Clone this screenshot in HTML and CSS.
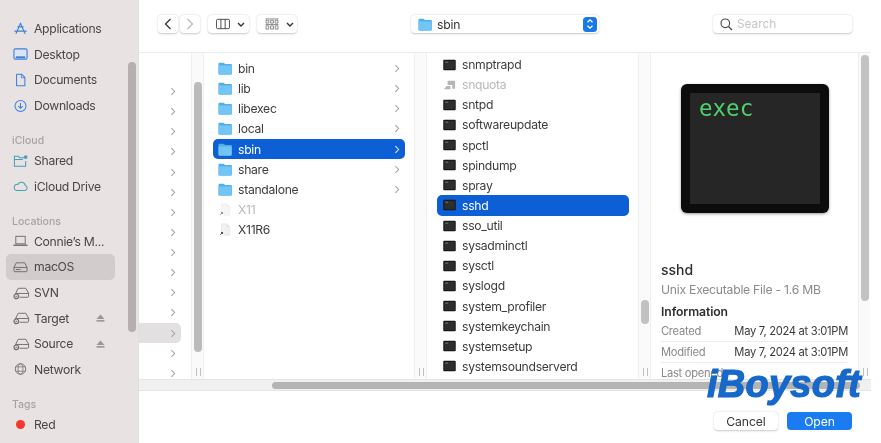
FILE: index.html
```html
<!DOCTYPE html>
<html lang="en">
<head>
<meta charset="utf-8">
<title>Open</title>
<link rel="stylesheet" href="styles.css">
</head>
<body>
<svg class="defs" width="0" height="0" aria-hidden="true">
  <symbol id="folder" viewBox="0 0 14 13"><path d="M0.5 2c0-.8.5-1.3 1.2-1.3h3.6c.5 0 .8.2 1.1.6l.5.7h5.9c.7 0 1.1.4 1.1 1.1v8.4c0 .7-.4 1.1-1.1 1.1H1.6c-.7 0-1.1-.4-1.1-1.1z" fill="#4fb0ea"/><path d="M.5 3.6h13v8c0 .7-.4 1.1-1.1 1.1H1.6c-.7 0-1.1-.4-1.1-1.1z" fill="#73c5f5"/></symbol>
  <symbol id="term" viewBox="0 0 14 12"><rect x=".3" y=".3" width="13.4" height="11.4" rx="1" fill="#111"/><rect x="1.3" y="1.3" width="11.4" height="9.4" fill="#2e2e2e"/><path d="M2.500 3h3" stroke="#7c9c86" stroke-width=".8"/></symbol>
  <symbol id="chev" viewBox="0 0 6 10"><path d="M1.200 1.200 4.800 5 1.200 8.800" fill="none" stroke="currentColor" stroke-width="1.200"/></symbol>
  <symbol id="disk" viewBox="0 0 16 14"><path d="M3.500 2.500h9l2.500 5v3.500a1 1 0 0 1-1 1H2a1 1 0 0 1-1-1V7.500z" fill="none" stroke="currentColor"/><path d="M1 7.500h14M3 9.700h5" fill="none" stroke="currentColor"/></symbol>
  <symbol id="netdisk" viewBox="0 0 18 14"><path d="M5.500 2h8l3 5v3.500a1 1 0 0 1-1 1H7M2.500 8l3-6M3 7.500h13.500" fill="none" stroke="currentColor"/><circle cx="3.500" cy="10.500" r="2.500" fill="#e9e2e2" stroke="currentColor" stroke-width="1.200"/><path d="M2.500 10.500h2" stroke="currentColor"/></symbol>
  <symbol id="eject" viewBox="0 0 10 9"><path d="M5 .5 9.500 5.500H.5z" fill="currentColor"/><rect x=".5" y="6.800" width="9" height="1.800" fill="currentColor"/></symbol>
  <symbol id="alias" viewBox="0 0 14 15"><path d="M3 1h6l3.500 3.500V14H3z" fill="#f1f1f1" stroke="#dcdcdc" stroke-width=".6"/><path d="M9 1v3.500h3.500" fill="#e0e0e0"/><rect x=".5" y="9.500" width="5" height="5" fill="#fff"/><path d="M1.500 13.500 4 11M2.300 10.800H4.200V12.700" fill="none" stroke="#222" stroke-width="1"/></symbol>
</svg>

<div class="window">
  <aside class="sidebar">
    <div class="side-scroll"></div>
    <ul class="side-list first">
      <li class="side-row"><svg class="side-icon" viewBox="0 0 16 16"><path d="M8 1.500 3 13M8 1.500 13 13M1.500 10.500h13M5 5.500l6 0" fill="none" stroke="#3d80dc" stroke-width="1.300" stroke-linecap="round"/></svg>Applications</li>
      <li class="side-row"><svg class="side-icon" viewBox="0 0 16 14"><rect x="1" y="1.500" width="14" height="11" rx="1.500" fill="#dbe4f2" stroke="#3d80dc" stroke-width="1.200"/><rect x="3" y="9.500" width="10" height="2" fill="#3d80dc"/></svg>Desktop</li>
      <li class="side-row"><svg class="side-icon" viewBox="0 0 16 16"><path d="M3.500 1.500h6l3.500 3.500v9.500h-9.500z" fill="none" stroke="#3d80dc" stroke-width="1.200" stroke-linejoin="round"/><path d="M9 1.500v4h4" fill="none" stroke="#3d80dc" stroke-width="1"/></svg>Documents</li>
      <li class="side-row"><svg class="side-icon" viewBox="0 0 16 16"><circle cx="8" cy="8" r="6.300" fill="none" stroke="#3d80dc" stroke-width="1.200"/><path d="M8 4.500v6M5.500 8.200 8 10.700l2.500-2.500" fill="none" stroke="#3d80dc" stroke-width="1.200"/></svg>Downloads</li>
    </ul>
    <h2 class="side-head">iCloud</h2>
    <ul class="side-list">
      <li class="side-row"><svg class="side-icon" viewBox="0 0 16 14"><path d="M12 3.500H7L6 2H1.500v10.500h12V7M1.500 5.500h9" fill="none" stroke="#45a0b8" stroke-width="1.100"/><circle cx="13.500" cy="2.800" r="2" fill="#45a0b8"/></svg>Shared</li>
      <li class="side-row"><svg class="side-icon" viewBox="0 0 16 12"><path d="M4 10.800h8.500a2.700 2.700 0 0 0 .6-5.300 4.200 4.200 0 0 0-7.900-1.200A3.300 3.300 0 0 0 4 10.800z" fill="none" stroke="#45a0b8" stroke-width="1.100"/></svg>iCloud Drive</li>
    </ul>
    <h2 class="side-head">Locations</h2>
    <ul class="side-list">
      <li class="side-row"><svg class="side-icon gray" viewBox="0 0 16 13"><rect x="3" y="1.500" width="10" height="8" fill="none" stroke="currentColor"/><path d="M.5 11h15" stroke="currentColor" stroke-width="1.500"/></svg><span class="clip">Connie’s M...</span></li>
      <li class="side-row selected"><svg class="side-icon gray"><use href="#disk"/></svg>macOS</li>
      <li class="side-row"><svg class="side-icon gray wide"><use href="#netdisk"/></svg>SVN</li>
      <li class="side-row"><svg class="side-icon gray wide"><use href="#netdisk"/></svg>Target<svg class="eject"><use href="#eject"/></svg></li>
      <li class="side-row"><svg class="side-icon gray wide"><use href="#netdisk"/></svg>Source<svg class="eject"><use href="#eject"/></svg></li>
      <li class="side-row"><svg class="side-icon gray" viewBox="0 0 16 16"><circle cx="8" cy="8" r="6" fill="none" stroke="currentColor"/><ellipse cx="8" cy="8" rx="2.800" ry="6" fill="none" stroke="currentColor" stroke-width=".8"/><path d="M2.500 5.500h11M2.500 10.500h11" stroke="currentColor" stroke-width=".8"/></svg>Network</li>
    </ul>
    <h2 class="side-head">Tags</h2>
    <ul class="side-list">
      <li class="side-row"><span class="tag-dot"></span>Red</li>
    </ul>
  </aside>

  <main class="main">
    <header class="toolbar">
      <div class="btn nav"><svg viewBox="0 0 8 12" class="nav-arrow"><path d="M6.500 1 1.500 6l5 5" fill="none" stroke="#333" stroke-width="1.300"/></svg></div>
      <div class="btn nav second"><svg viewBox="0 0 8 12" class="nav-arrow"><path d="M1.500 1l5 5-5 5" fill="none" stroke="#bdbdbd" stroke-width="1.300"/></svg></div>
      <div class="btn view">
        <svg class="view-icon" viewBox="0 0 15 11"><rect x=".5" y=".5" width="14" height="10" rx="1.500" fill="none" stroke="#444"/><path d="M5.300 .5v10M9.800 .5v10" stroke="#444"/></svg>
        <svg class="down" viewBox="0 0 8 5"><path d="M1 1l3 3 3-3" fill="none" stroke="#333" stroke-width="1.400"/></svg>
      </div>
      <div class="btn group">
        <svg class="view-icon" viewBox="0 0 14 13"><path d="M0 1h14M0 7h14" stroke="#777" stroke-width=".9"/><path d="M.5 2.500h3v3h-3zM5.500 2.500h3v3h-3zM10.500 2.500h3v3h-3zM.5 8.500h3v3.500h-3zM5.500 8.500h3v3.500h-3zM10.500 8.500h3v3.500h-3z" fill="none" stroke="#666" stroke-width=".8"/></svg>
        <svg class="down" viewBox="0 0 8 5"><path d="M1 1l3 3 3-3" fill="none" stroke="#333" stroke-width="1.400"/></svg>
      </div>
      <div class="btn path">
        <svg class="folder"><use href="#folder"/></svg>
        <span class="path-label">sbin</span>
        <span class="stepper"><svg viewBox="0 0 8 12" class="stepper-icon"><path d="M1.500 4.300 4 1.800l2.500 2.500M1.500 7.700 4 10.200l2.500-2.500" fill="none" stroke="#fff" stroke-width="1.300"/></svg></span>
      </div>
      <div class="btn search">
        <svg class="search-icon" viewBox="0 0 13 13"><circle cx="5.300" cy="5.300" r="4.300" fill="none" stroke="#444" stroke-width="1.100"/><path d="M8.500 8.500 12 12" stroke="#444" stroke-width="1.300"/></svg>
        <span class="search-text">Search</span>
      </div>
    </header>

    <section class="browser">
      <div class="columns">
        <div class="col col-0">
          <div class="row-0"><svg class="chev"><use href="#chev"/></svg></div>
          <div class="row-0"><svg class="chev"><use href="#chev"/></svg></div>
          <div class="row-0"><svg class="chev"><use href="#chev"/></svg></div>
          <div class="row-0"><svg class="chev"><use href="#chev"/></svg></div>
          <div class="row-0"><svg class="chev"><use href="#chev"/></svg></div>
          <div class="row-0"><svg class="chev"><use href="#chev"/></svg></div>
          <div class="row-0"><svg class="chev"><use href="#chev"/></svg></div>
          <div class="row-0"><svg class="chev"><use href="#chev"/></svg></div>
          <div class="row-0"><svg class="chev"><use href="#chev"/></svg></div>
          <div class="row-0"><svg class="chev"><use href="#chev"/></svg></div>
          <div class="row-0"><svg class="chev"><use href="#chev"/></svg></div>
          <div class="row-0"><svg class="chev"><use href="#chev"/></svg></div>
          <div class="row-0 current"><svg class="chev"><use href="#chev"/></svg></div>
          <div class="row-0"><svg class="chev"><use href="#chev"/></svg></div>
          <div class="row-0"><svg class="chev"><use href="#chev"/></svg></div>
        </div>
        <div class="gutter"><div class="thumb thumb-0"></div><span class="grip"></span></div>

        <ul class="col col-1">
          <li class="row"><svg class="folder"><use href="#folder"/></svg><span class="name">bin</span><svg class="chev"><use href="#chev"/></svg></li>
          <li class="row"><svg class="folder"><use href="#folder"/></svg><span class="name">lib</span><svg class="chev"><use href="#chev"/></svg></li>
          <li class="row"><svg class="folder"><use href="#folder"/></svg><span class="name">libexec</span><svg class="chev"><use href="#chev"/></svg></li>
          <li class="row"><svg class="folder"><use href="#folder"/></svg><span class="name">local</span><svg class="chev"><use href="#chev"/></svg></li>
          <li class="row active"><svg class="folder"><use href="#folder"/></svg><span class="name">sbin</span><svg class="chev"><use href="#chev"/></svg></li>
          <li class="row"><svg class="folder"><use href="#folder"/></svg><span class="name">share</span><svg class="chev"><use href="#chev"/></svg></li>
          <li class="row"><svg class="folder"><use href="#folder"/></svg><span class="name">standalone</span><svg class="chev"><use href="#chev"/></svg></li>
          <li class="row dim"><svg class="folder alias-icon"><use href="#alias"/></svg><span class="name">X11</span></li>
          <li class="row"><svg class="folder"><use href="#alias"/></svg><span class="name">X11R6</span></li>
        </ul>
        <div class="gutter"><span class="grip"></span></div>

        <ul class="col col-2">
          <li class="row"><svg class="term"><use href="#term"/></svg><span class="name">snmptrapd</span></li>
          <li class="row dim"><svg class="term" viewBox="0 0 14 12"><path d="M5 1.500h8v8.500h-3V6H5zM1 10.500l3-3.500h4v3.500z" fill="#b5b5b5"/></svg><span class="name">snquota</span></li>
          <li class="row"><svg class="term"><use href="#term"/></svg><span class="name">sntpd</span></li>
          <li class="row"><svg class="term"><use href="#term"/></svg><span class="name">softwareupdate</span></li>
          <li class="row"><svg class="term"><use href="#term"/></svg><span class="name">spctl</span></li>
          <li class="row"><svg class="term"><use href="#term"/></svg><span class="name">spindump</span></li>
          <li class="row"><svg class="term"><use href="#term"/></svg><span class="name">spray</span></li>
          <li class="row active"><svg class="term"><use href="#term"/></svg><span class="name">sshd</span></li>
          <li class="row"><svg class="term"><use href="#term"/></svg><span class="name">sso_util</span></li>
          <li class="row"><svg class="term"><use href="#term"/></svg><span class="name">sysadminctl</span></li>
          <li class="row"><svg class="term"><use href="#term"/></svg><span class="name">sysctl</span></li>
          <li class="row"><svg class="term"><use href="#term"/></svg><span class="name">syslogd</span></li>
          <li class="row"><svg class="term"><use href="#term"/></svg><span class="name">system_profiler</span></li>
          <li class="row"><svg class="term"><use href="#term"/></svg><span class="name">systemkeychain</span></li>
          <li class="row"><svg class="term"><use href="#term"/></svg><span class="name">systemsetup</span></li>
          <li class="row"><svg class="term"><use href="#term"/></svg><span class="name">systemsoundserverd</span></li>
        </ul>
        <div class="gutter"><div class="thumb thumb-2"></div><span class="grip"></span></div>

        <div class="preview">
          <div class="exec-icon"><div class="exec-screen">exec</div></div>
          <h3 class="file-name">sshd</h3>
          <p class="file-kind">Unix Executable File - 1.6 MB</p>
          <h4 class="info-head">Information</h4>
          <dl class="info">
            <div class="info-row"><dt>Created</dt><dd>May 7, 2024 at 3:01PM</dd></div>
            <div class="info-row"><dt>Modified</dt><dd>May 7, 2024 at 3:01PM</dd></div>
            <div class="info-row"><dt>Last opened</dt><dd></dd></div>
          </dl>
        </div>
        <div class="gutter last"><div class="thumb thumb-3"></div><span class="grip"></span></div>
      </div>
      <div class="hscroll"><div class="hthumb"></div></div>
    </section>

    <footer class="footer">
      <div class="btn action">Cancel</div>
      <div class="btn action primary">Open</div>
    </footer>
    <div class="watermark">iBoysoft</div>
  </main>
</div>
</body>
</html>
```

FILE: styles.css
```css
* { box-sizing: border-box; }
html, body { margin: 0; padding: 0; height: 100%; background: #fff; overflow: hidden; }
body { font-family: Inter, "Liberation Sans", sans-serif; color: #3c3c3c; }
ul, dl, dd, h2, h3, h4, p { margin: 0; padding: 0; list-style: none; font-weight: inherit; }
.defs { position: absolute; }

.window { display: flex; width: 871px; height: 443px; filter: blur(.35px); }

/* Sidebar */
.sidebar { position: relative; width: 139px; flex: none; background: #e9e2e2; padding: 16px 0 0 6px; border-right: 1px solid #e2dcdc; }
.side-scroll { position: absolute; left: 128px; top: 62px; width: 7.500px; height: 270px; border-radius: 4px; background: #b5afaf; }
.side-row { display: flex; align-items: center; width: 109px; height: 25.600px; padding-left: 8px; font-size: 12.200px; letter-spacing: -.3px; color: #4a4646; border-radius: 5px; white-space: nowrap; }
.side-row.selected { background: #d2cccc; }
.side-icon { width: 15px; height: 14px; margin-right: 6px; flex: none; margin-left: -1px; }
.side-icon.wide { width: 17px; margin-right: 4px; }
.side-icon.gray { color: #6f6c6c; }
.side-head { height: 14px; margin: 15.500px 0 0 6px; font-size: 10.500px; font-weight: 500; line-height: 14px; color: #a8a3a3; }
.clip { white-space: nowrap; }
.eject { width: 9px; height: 8px; margin-left: auto; margin-right: 10px; color: #9a9696; }
.tag-dot { width: 9px; height: 9px; margin: 0 9px 0 2px; border-radius: 50%; background: #f5372c; flex: none; }

/* Main */
.main { position: relative; flex: 1; min-width: 0; display: flex; flex-direction: column; background: #fff; }
.toolbar { height: 53px; flex: none; display: flex; align-items: flex-start; padding: 15px 19px 0 19px; border-bottom: 1px solid #ececec; }
.btn { height: 18px; background: #fff; border-radius: 4px; box-shadow: 0 .5px 2px rgba(0,0,0,.22); display: flex; align-items: center; }
.nav { width: 20px; justify-content: center; }
.nav.second { margin-left: 2px; }
.nav-arrow { width: 8px; height: 12px; }
.view { width: 41px; margin-left: 8px; padding-left: 8px; }
.group { width: 40px; margin-left: 8px; padding-left: 8px; }
.view-icon { width: 14px; height: 12px; flex: none; }
.down { width: 8px; height: 5px; margin-left: 7px; flex: none; }
.path { width: 188px; margin-left: 114px; padding: 0 2px 0 7px; }
.path-label { margin-left: 5px; font-size: 12.200px; letter-spacing: -.2px; color: #333; }
.path .folder { margin: 0; }
.stepper { margin-left: auto; width: 14px; height: 15px; border-radius: 3.500px; background: #1a78ea; display: flex; align-items: center; justify-content: center; }
.stepper-icon { width: 8px; height: 12px; }
.search { width: 139px; margin-left: 114px; padding-left: 7px; }
.search-icon { width: 13px; height: 13px; flex: none; }
.search-text { margin-left: 4px; font-size: 11.800px; color: #c4c4c4; }

/* Browser */
.browser { height: 338px; flex: none; display: flex; flex-direction: column; }
.columns { flex: 1; min-height: 0; display: flex; }
.col { overflow: hidden; flex: none; }
.gutter { position: relative; flex: none; width: 13px; background: #fafafa; border-left: 1px solid #efefef; border-right: 1px solid #efefef; }
.thumb { position: absolute; left: 2px; width: 8px; border-radius: 4px; background: #c2c2c2; }
.thumb-0 { top: 29px; height: 270px; background: #bbb; }
.thumb-2 { top: 247px; height: 24px; }
.thumb-3 { top: 2px; height: 246px; }
.grip { position: absolute; left: 3.500px; bottom: 3px; width: 5px; height: 8px; border-left: 1px solid #c0c0c0; border-right: 1px solid #c0c0c0; }

.col-0 { width: 52px; padding-top: 28.500px; }
.row-0 { height: 20.130px; display: flex; align-items: center; justify-content: flex-end; padding-right: 5px; width: 42px; color: #a5a5a5; border-radius: 0 5px 5px 0; }
.row-0.current { background: #e2e0e0; }
.chev { width: 6px; height: 9px; flex: none; color: #a5a5a5; }

.col-1 { width: 210px; padding: 5.500px 9px 0; }
.col-2 { width: 211px; padding: 1.500px 9px 0 10px; }
.row { height: 20.130px; display: flex; align-items: center; padding: 0 5px; font-size: 12.200px; letter-spacing: -.3px; color: #3c3c3c; border-radius: 5px; white-space: nowrap; }
.col-2 .row { padding-left: 6px; }
.folder { width: 14px; height: 13px; flex: none; margin-right: 6px; }
.term { width: 13px; height: 12px; flex: none; margin-right: 6px; }
.name { flex: 1; }
.row.active { background: #0d5fd6; color: #fff; }
.row.active .chev { color: #dfe9fb; }
.row.dim { color: #b9b9b9; }
.row.dim .folder { opacity: .6; }

/* Preview */
.preview { width: 207px; flex: none; overflow: hidden; padding: 31px 10px 0 10px; }
.exec-icon { width: 148px; height: 129px; margin-left: 20px; border-radius: 6px; background: #0c0c0c; padding: 9px; box-shadow: 0 1px 3px rgba(0,0,0,.4); }
.exec-screen { height: 100%; background: #262626; padding: 2px 0 0 9px; font-family: "DejaVu Sans Mono", monospace; font-size: 22.500px; line-height: 26px; color: #4ed26c; }
.file-name { margin-top: 48px; font-size: 14px; line-height: 18px; font-weight: 500; color: #2e2e2e; }
.file-kind { margin-top: 2px; font-size: 12.200px; letter-spacing: -.25px; line-height: 18px; color: #8a8a8a; }
.info-head { margin-top: 4px; font-size: 12.200px; letter-spacing: -.1px; line-height: 18px; font-weight: 600; color: #2e2e2e; }
.info-row { display: flex; justify-content: space-between; align-items: center; height: 21px; font-size: 11.200px; letter-spacing: -.3px; border-bottom: 1px solid #ececec; }
.info-row dt { color: #8a8a8a; }
.info-row dd { color: #3a3a3a; }
.gutter.last { width: 12px; border-right: none; }

.hscroll { height: 12px; flex: none; background: #f0f0f0; border-top: 1px solid #e5e5e5; border-bottom: 1px solid #e5e5e5; position: relative; }
.hthumb { position: absolute; left: 133px; width: 588px; top: 1.500px; height: 7.500px; border-radius: 4px; background: #b4b4b4; }

/* Footer */
.footer { flex: 1; display: flex; justify-content: flex-end; align-items: flex-start; gap: 9px; padding: 21px 19px 0 0; }
.action { width: 64px; justify-content: center; font-size: 12.200px; letter-spacing: -.1px; color: #333; }
.action.primary { width: 65px; background: #1a7cf0; color: #fff; box-shadow: none; }

.watermark { position: absolute; left: 568px; top: 361px; font-family: "Liberation Sans", sans-serif; font-weight: 700; font-style: italic; font-size: 38px; line-height: 46px; letter-spacing: .25px; color: #1668c9; -webkit-text-stroke: 1.200px #1668c9; }
```
